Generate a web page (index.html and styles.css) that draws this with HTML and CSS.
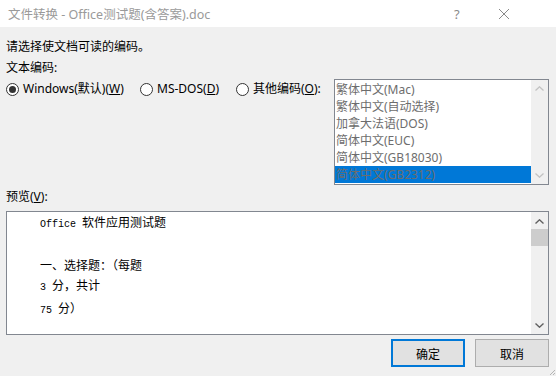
FILE: index.html
```html
<!DOCTYPE html>
<html lang="zh-CN">
<head>
  <meta charset="UTF-8" />
  <meta name="viewport" content="width=device-width, initial-scale=1.0"/>
  <title>文件转换</title>
  <link rel="stylesheet" href="styles.css">
</head>
<body>

<div class="window">
  <div class="titlebar">
    <span class="title">文件转换 - Office测试题(含答案).doc</span>
    <span class="help">?</span>
    <svg class="close" width="12" height="12" viewBox="0 0 12 12">
      <path d="M1 1 L11 11 M11 1 L1 11" stroke="#8a8a8a" stroke-width="1" fill="none"/>
    </svg>
  </div>

  <div class="content">
    <p class="line">请选择使文档可读的编码。</p>
    <p class="line">文本编码:</p>

    <div class="encoding-row">
      <div class="radios">
        <label class="radio radio-win"><span class="circle checked"></span><span>Windows(默认)(<u>W</u>)</span></label>
        <label class="radio radio-dos"><span class="circle"></span><span>MS-DOS(<u>D</u>)</span></label>
        <label class="radio"><span class="circle"></span><span>其他编码(<u>O</u>):</span></label>
      </div>

      <div class="listbox">
        <ul class="items">
          <li>繁体中文(Mac)</li>
          <li>繁体中文(自动选择)</li>
          <li>加拿大法语(DOS)</li>
          <li>简体中文(EUC)</li>
          <li>简体中文(GB18030)</li>
          <li class="selected">简体中文(GB2312)</li>
        </ul>
        <div class="scrollbar disabled">
          <svg class="arrow" width="9" height="5" viewBox="0 0 9 5"><path d="M0.5 4.5 L4.5 0.8 L8.5 4.5" stroke="#c2c2c2" stroke-width="1.3" fill="none"/></svg>
          <svg class="arrow" width="9" height="5" viewBox="0 0 9 5"><path d="M0.5 0.5 L4.5 4.2 L8.5 0.5" stroke="#c2c2c2" stroke-width="1.3" fill="none"/></svg>
        </div>
      </div>
    </div>

    <p class="line preview-label">预览(<u>V</u>):</p>

    <div class="preview">
      <div class="preview-text">
        <div><span class="latin">Office </span>软件应用测试题</div>
        <div>&nbsp;</div>
        <div>一、选择题：（每题</div>
        <div><span class="latin">3 </span>分，共计</div>
        <div><span class="latin">75 </span>分）</div>
      </div>
      <div class="scrollbar">
        <svg class="arrow" width="9" height="5" viewBox="0 0 9 5"><path d="M0.5 4.5 L4.5 0.8 L8.5 4.5" stroke="#606060" stroke-width="1.4" fill="none"/></svg>
        <div class="thumb"></div>
        <div class="track"></div>
        <svg class="arrow" width="9" height="5" viewBox="0 0 9 5"><path d="M0.5 0.5 L4.5 4.2 L8.5 0.5" stroke="#606060" stroke-width="1.4" fill="none"/></svg>
      </div>
    </div>

    <div class="buttons">
      <button class="btn btn-default">确定</button>
      <button class="btn">取消</button>
    </div>
  </div>

  <svg class="grip" width="7" height="7" viewBox="0 0 7 7">
    <path d="M6 1 L1 6 M6 4 L4 6" stroke="#b5b5b5" stroke-width="1" fill="none"/>
  </svg>
</div>

</body>
</html>
```

FILE: styles.css
```css
body {
  margin: 0;
  padding: 0;
  font-family: "Noto Sans", "Noto Sans CJK SC", sans-serif;
  font-size: 12px;
  color: #000;
  background-color: #f0f0f0;
}
.window {
  position: relative;
  width: 556px;
  height: 376px;
  overflow: hidden;
  background-color: #f0f0f0;
}
.titlebar {
  display: flex;
  align-items: center;
  height: 27px;
  background-color: #fff;
  padding-left: 8px;
  color: #9a9a9a;
}
.title {
  flex: 1;
  font-size: 12.5px;
}
.help {
  width: 14px;
  margin-right: 30px;
  font-size: 13px;
  color: #8a8a8a;
}
.close {
  margin-right: 46px;
}
.content {
  padding: 0 7px 0 6px;
}
.line {
  margin: 0;
  line-height: 21px;
}
.content > .line:first-child {
  margin-top: 9px;
}
.encoding-row {
  display: flex;
  align-items: flex-start;
  margin-top: 1px;
}
.radios {
  display: flex;
  width: 328px;
  line-height: 20px;
}
.radio {
  display: flex;
  align-items: center;
  gap: 4px;
}
.radio-win {
  width: 134px;
}
.radio-dos {
  width: 96px;
}
.circle {
  box-sizing: border-box;
  width: 13px;
  height: 13px;
  border: 1px solid #333;
  border-radius: 50%;
  background-color: #fff;
  display: flex;
  align-items: center;
  justify-content: center;
}
.circle.checked::after {
  content: "";
  width: 7px;
  height: 7px;
  border-radius: 50%;
  background-color: #333;
}
.listbox {
  display: flex;
  flex: 1;
  height: 104px;
  border: 1px solid #828790;
  background-color: #fff;
}
.items {
  flex: 1;
  list-style: none;
  margin: 0;
  padding: 1px 0 0 0;
  color: #6d6d6d;
}
.items li {
  height: 17px;
  line-height: 17px;
  padding-left: 1px;
}
.items li.selected {
  background-color: #0078d7;
}
.scrollbar {
  display: flex;
  flex-direction: column;
  align-items: center;
  justify-content: space-between;
  width: 17px;
  background-color: #f0f0f0;
  padding: 6px 0;
  box-sizing: border-box;
}
.preview-label {
  margin-top: 2px;
  line-height: 20px;
}
.preview {
  display: flex;
  height: 122px;
  margin-top: 4px;
  border: 1px solid #828790;
  background-color: #fff;
}
.preview-text {
  flex: 1;
  padding-left: 33px;
  line-height: 20px;
  font-family: "Noto Sans CJK SC", sans-serif;
}
.latin {
  font-family: "Liberation Mono", monospace;
  font-size: 10px;
}
.preview .scrollbar {
  justify-content: flex-start;
  padding: 7px 0 6px 0;
}
.thumb {
  width: 17px;
  height: 17px;
  margin-top: 5px;
  background-color: #cdcdcd;
}
.track {
  flex: 1;
}
.buttons {
  display: flex;
  justify-content: flex-end;
  gap: 10px;
  margin-top: 4px;
}
.btn {
  box-sizing: border-box;
  width: 74px;
  height: 28px;
  border: 1px solid #adadad;
  background-color: #e1e1e1;
  font-family: "Noto Sans CJK SC", sans-serif;
  font-size: 12px;
  color: #000;
  padding: 0;
}
.btn-default {
  border: 2px solid #0078d7;
}
.grip {
  position: absolute;
  right: 0;
  bottom: 0;
}
```
